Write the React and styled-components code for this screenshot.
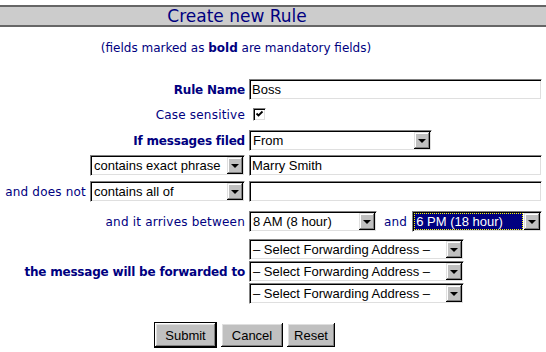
import styled, { createGlobalStyle } from "styled-components";

const GlobalStyle = createGlobalStyle`
  body {
    margin: 0;
    background: #fff;
  }
`;

const Page = styled.div`
  padding-top: 5px;
  font-family: "DejaVu Sans", Verdana, sans-serif;
  color: #000080;
`;

const TitleBar = styled.h1`
  margin: 0;
  height: 18px;
  padding-right: 72px;
  border-top: 2px solid #666;
  border-bottom: 2px solid #666;
  background: #ccc;
  font-size: 17px;
  font-weight: normal;
  line-height: 18px;
  text-align: center;
  color: #000080;
`;

const Note = styled.p`
  margin: 14px 0 0;
  padding-right: 74px;
  font-size: 12px;
  line-height: 14px;
  text-align: center;
`;

const Form = styled.div`
  margin-top: 24px;
  display: flex;
  flex-direction: column;
`;

const Row = styled.div`
  display: grid;
  grid-template-columns: 245px 1fr;
  column-gap: 4px;
  align-items: center;
  min-height: 21px;
  margin-top: ${(p) => p.$gap || 0}px;
`;

const Label = styled.div`
  display: flex;
  justify-content: flex-end;
  align-items: center;
  gap: 4px;
  font-size: 12px;
  font-weight: ${(p) => (p.$bold ? "bold" : "normal")};
  letter-spacing: ${(p) => (p.$bold ? "-0.2px" : "0.2px")};
  white-space: nowrap;
`;

const Field = styled.div`
  display: flex;
  align-items: center;
`;

const Stack = styled.div`
  display: flex;
  flex-direction: column;
  gap: 1px;
`;

const sunken = `
  box-sizing: border-box;
  height: 21px;
  background: #fff;
  border: 1px solid;
  border-color: #808080 #fff #fff #808080;
  box-shadow: inset 1px 1px 0 #000, inset -1px -1px 0 #dfdfdf;
`;

const TextInput = styled.input`
  ${sunken}
  width: ${(p) => p.$w}px;
  margin: 0;
  padding: 1px 2px;
  font-family: "Liberation Sans", Arial, sans-serif;
  font-size: 13px;
  color: #000;
  outline: none;
`;

const SelectBox = styled.div`
  ${sunken}
  display: flex;
  width: ${(p) => p.$w}px;
  padding: 1px;
  flex-shrink: 0;
`;

const SelectValue = styled.span`
  flex: 1;
  margin-right: 1px;
  padding-left: 2px;
  overflow: hidden;
  white-space: nowrap;
  font-family: "Liberation Sans", Arial, sans-serif;
  font-size: 13px;
  line-height: 17px;
  letter-spacing: 0;
  font-weight: normal;
  text-align: left;
  color: ${(p) => (p.$selected ? "#fff" : "#000")};
  background: ${(p) => (p.$selected ? "#000080" : "transparent")};
  outline: ${(p) => (p.$selected ? "1px dotted #ffff00" : "none")};
  outline-offset: -1px;
`;

const DropButton = styled.span`
  display: flex;
  align-items: center;
  justify-content: center;
  width: 16px;
  height: 17px;
  background: #c0c0c0;
  box-shadow: inset -1px -1px 0 #000, inset 1px 1px 0 #dfdfdf,
    inset -2px -2px 0 #808080, inset 2px 2px 0 #fff;
`;

const Arrow = styled.span`
  width: 0;
  height: 0;
  margin-top: 1px;
  border-left: 4px solid transparent;
  border-right: 4px solid transparent;
  border-top: 4px solid #000;
`;

const CheckBox = styled.span`
  ${sunken}
  display: flex;
  align-items: center;
  justify-content: center;
  width: 13px;
  height: 13px;
  margin-left: 4px;
`;

const Joiner = styled.span`
  margin: 0 5px 0 7px;
  font-size: 12px;
  letter-spacing: 0.2px;
`;

const ButtonRow = styled.div`
  display: flex;
  align-items: center;
  gap: 4px;
  margin-top: 18px;
  padding-left: 154px;
`;

const Button = styled.button`
  box-sizing: border-box;
  width: ${(p) => p.$w}px;
  height: ${(p) => (p.$default ? 26 : 24)}px;
  margin: 0;
  padding: 0;
  background: #c0c0c0;
  border: ${(p) => (p.$default ? "1px solid #000" : "none")};
  box-shadow: inset -1px -1px 0 #000, inset 1px 1px 0 #fff,
    inset -2px -2px 0 #808080, inset 2px 2px 0 #dfdfdf;
  font-family: "Liberation Sans", Arial, sans-serif;
  font-size: 13px;
  color: #000;
`;

function Select({ width, value, selected }) {
  return (
    <SelectBox $w={width}>
      <SelectValue $selected={selected}>{value}</SelectValue>
      <DropButton>
        <Arrow />
      </DropButton>
    </SelectBox>
  );
}

export default function App() {
  const forward = "– Select Forwarding Address –";

  return (
    <>
      <GlobalStyle />
      <Page>
        <TitleBar>Create new Rule</TitleBar>
        <Note>
          (fields marked as <b>bold</b> are mandatory fields)
        </Note>

        <Form>
          <Row>
            <Label $bold>Rule Name</Label>
            <Field>
              <TextInput $w={293} defaultValue="Boss" />
            </Field>
          </Row>

          <Row $gap={4}>
            <Label>Case sensitive</Label>
            <Field>
              <CheckBox>
                <svg width="9" height="9" viewBox="0 0 9 9">
                  <path d="M1.5 3.5 L3.5 5.5 L7.5 1.5" fill="none" stroke="#000" strokeWidth="1.8" />
                </svg>
              </CheckBox>
            </Field>
          </Row>

          <Row $gap={5}>
            <Label $bold>If messages filed</Label>
            <Field>
              <Select width={183} value="From" />
            </Field>
          </Row>

          <Row $gap={4}>
            <Label>
              <Select width={155} value="contains exact phrase" />
            </Label>
            <Field>
              <TextInput $w={293} defaultValue="Marry Smith" />
            </Field>
          </Row>

          <Row $gap={5}>
            <Label>
              and does not
              <Select width={155} value="contains all of" />
            </Label>
            <Field>
              <TextInput $w={293} defaultValue="" />
            </Field>
          </Row>

          <Row $gap={9}>
            <Label>and it arrives between</Label>
            <Field>
              <Select width={128} value="8 AM (8 hour)" />
              <Joiner>and</Joiner>
              <Select width={130} value="6 PM (18 hour)" selected />
            </Field>
          </Row>

          <Row $gap={7}>
            <Label $bold>the message will be forwarded to</Label>
            <Stack>
              <Select width={215} value={forward} />
              <Select width={215} value={forward} />
              <Select width={215} value={forward} />
            </Stack>
          </Row>
        </Form>

        <ButtonRow>
          <Button $w={63} $default>
            Submit
          </Button>
          <Button $w={62}>Cancel</Button>
          <Button $w={48}>Reset</Button>
        </ButtonRow>
      </Page>
    </>
  );
}
